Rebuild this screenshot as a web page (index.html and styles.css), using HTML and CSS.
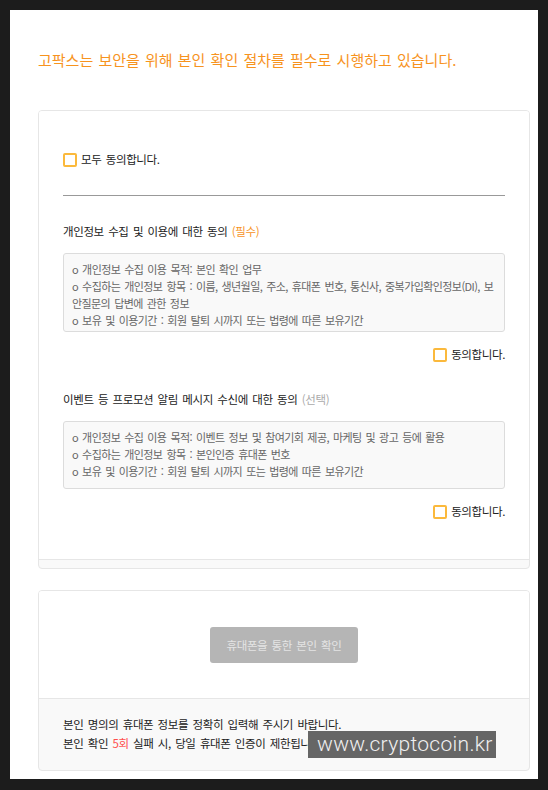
FILE: index.html
```html
<!DOCTYPE html>
<html lang="ko">
<head>
<meta charset="utf-8">
<title>본인 확인</title>
<link rel="stylesheet" href="styles.css">
</head>
<body>
<div class="frame">
  <main class="page">
    <h1 class="title">고팍스는 보안을 위해 본인 확인 절차를 필수로 시행하고 있습니다.</h1>

    <section class="card">
      <div class="card-body">
        <label class="check-row">
          <span class="checkbox"></span>
          <span class="check-label">모두 동의합니다.</span>
        </label>
        <hr class="divider">

        <h2 class="heading">개인정보 수집 및 이용에 대한 동의 <span class="req">(필수)</span></h2>
        <div class="terms terms-fixed">
          o 개인정보 수집 이용 목적: 본인 확인 업무<br>
          o 수집하는 개인정보 항목 : 이름, 생년월일, 주소, 휴대폰 번호, 통신사, 중복가입확인정보(DI), 보<br>안질문의 답변에 관한 정보<br>
          o 보유 및 이용기간 : 회원 탈퇴 시까지 또는 법령에 따른 보유기간
        </div>
        <label class="check-row agree">
          <span class="checkbox"></span>
          <span class="check-label">동의합니다.</span>
        </label>

        <h2 class="heading heading-2">이벤트 등 프로모션 알림 메시지 수신에 대한 동의 <span class="opt">(선택)</span></h2>
        <div class="terms">
          o 개인정보 수집 이용 목적: 이벤트 정보 및 참여기회 제공, 마케팅 및 광고 등에 활용<br>
          o 수집하는 개인정보 항목 : 본인인증 휴대폰 번호<br>
          o 보유 및 이용기간 : 회원 탈퇴 시까지 또는 법령에 따른 보유기간
        </div>
        <label class="check-row agree">
          <span class="checkbox"></span>
          <span class="check-label">동의합니다.</span>
        </label>
      </div>
      <div class="card-foot card-foot-empty"></div>
    </section>

    <section class="card card-2">
      <div class="card-body card-body-btn">
        <button class="verify-btn" type="button" disabled>휴대폰을 통한 본인 확인</button>
      </div>
      <div class="card-foot">
        <p class="notice">본인 명의의 휴대폰 정보를 정확히 입력해 주시기 바랍니다.</p>
        <p class="notice">본인 확인 <span class="red">5회</span> 실패 시, 당일 휴대폰 인증이 제한됩니다.</p>
      </div>
    </section>
  </main>
  <div class="watermark">www.cryptocoin.kr</div>
</div>
</body>
</html>
```

FILE: styles.css
```css
* {
  box-sizing: border-box;
}

html, body {
  margin: 0;
  padding: 0;
  background: #1c1c1c;
}

body {
  font-family: "Noto Sans CJK KR", "Noto Sans", sans-serif;
  color: #222;
}

.frame {
  position: relative;
  width: 548px;
  height: 790px;
  padding: 10px 10px 11px 10px;
}

.page {
  background: #fff;
  height: 769px;
  padding: 39px 8px 0 28px;
}

.title {
  margin: 0 0 39px 0;
  font-size: 15px;
  font-weight: 400;
  line-height: 22px;
  letter-spacing: 0;
  word-spacing: 1px;
  color: #f7931e;
}

.card {
  width: 492px;
  border: 1px solid #e6e6e6;
  border-radius: 4px;
  background: #f9f9f9;
  overflow: hidden;
}

.card-body {
  background: #fff;
  padding: 38px 24px 38px 24px;
  border-bottom: 1px solid #e6e6e6;
}

.card-foot-empty {
  height: 8px;
}

.check-row {
  display: flex;
  align-items: center;
  height: 20px;
  gap: 4px;
}

.checkbox {
  display: block;
  width: 14px;
  height: 14px;
  border: 2px solid #fbb93c;
  border-radius: 2px;
  background: #fff;
  margin-top: 1px;
}

.check-label,
.heading,
.notice {
  font-size: 11.5px;
  letter-spacing: -0.38px;
  word-spacing: 1.5px;
  line-height: 20px;
  color: #222;
}

.agree {
  justify-content: flex-end;
  margin-top: 12px;
}

.divider {
  border: 0;
  height: 1px;
  background: #999;
  margin: 26px 0 0 0;
}

.heading {
  margin: 25px 0 12px 0;
  font-weight: 400;
}

.heading-2 {
  margin-top: 25px;
}

.req {
  color: #f7931e;
}

.opt {
  color: #aaa;
}

.terms {
  background: #f9f9f9;
  border: 1px solid #dcdcdc;
  border-radius: 3px;
  padding: 7px 8px 8px 8px;
  font-size: 11px;
  letter-spacing: -0.58px;
  word-spacing: 1.5px;
  line-height: 17px;
  color: #666;
}

.terms-fixed {
  height: 79px;
  overflow: hidden;
}

.card-2 {
  margin-top: 21px;
}

.card-body-btn {
  display: flex;
  justify-content: center;
  padding: 36px 24px 35px 24px;
}

.verify-btn {
  width: 148px;
  height: 36px;
  border: 0;
  border-radius: 3px;
  background: #b5b5b5;
  color: #e4e4e4;
  font-family: "Noto Sans CJK KR", "Noto Sans", sans-serif;
  font-size: 11.5px;
  letter-spacing: -0.38px;
  word-spacing: 1.5px;
  padding: 0;
}

.card-2 .card-foot {
  padding: 16px 24px 17px 24px;
}

.notice {
  margin: 0;
  line-height: 19px;
}

.red {
  color: #ff4d4d;
}

.watermark {
  position: absolute;
  left: 308px;
  top: 731px;
  width: 188px;
  height: 27px;
  background: #666;
  color: #f0f0f0;
  font-family: Roboto, "Liberation Sans", sans-serif;
  font-weight: 300;
  font-size: 21px;
  line-height: 27px;
  letter-spacing: 0.3px;
  padding-left: 9px;
  white-space: nowrap;
}
```
